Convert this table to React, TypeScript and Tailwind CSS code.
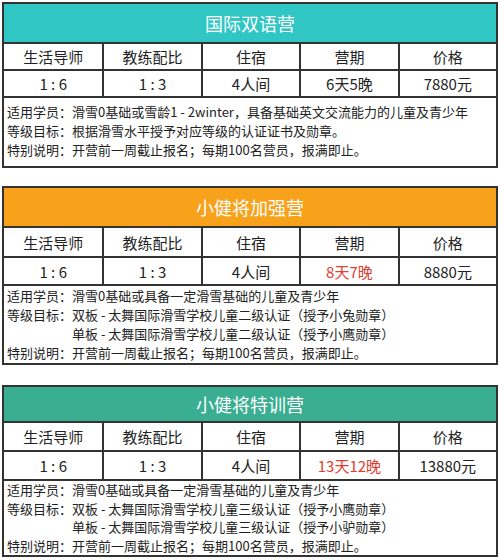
const font = { fontFamily: '"Noto Sans CJK SC", "Noto Sans", sans-serif' };

type Camp = {
  title: string;
  bar: string;
  period: string;
  periodRed: boolean;
  price: string;
  students: string;
  goals: string[];
  // per-table sizes, the three tables in the picture are not quite alike
  gap: string;
  titleH: string;
  headH: string;
  valH: string;
  textBox: string;
  line: string;
};

const camps: Camp[] = [
  {
    title: "国际双语营",
    bar: "bg-[#2fc6c4]",
    period: "6天5晚",
    periodRed: false,
    price: "7880元",
    students: "滑雪0基础或雪龄1 - 2winter，具备基础英文交流能力的儿童及青少年",
    goals: ["根据滑雪水平授予对应等级的认证证书及勋章。"],
    gap: "mt-0",
    titleH: "h-[38px]",
    headH: "h-[25px]",
    valH: "h-[25px]",
    textBox: "pt-[4px] pb-[7px]",
    line: "h-[19px] leading-[19px]",
  },
  {
    title: "小健将加强营",
    bar: "bg-[#f8a21c]",
    period: "8天7晚",
    periodRed: true,
    price: "8880元",
    students: "滑雪0基础或具备一定滑雪基础的儿童及青少年",
    goals: [
      "双板 - 太舞国际滑雪学校儿童二级认证（授予小兔勋章）",
      "单板 - 太舞国际滑雪学校儿童二级认证（授予小鹰勋章）",
    ],
    gap: "mt-[18px]",
    titleH: "h-[38px]",
    headH: "h-[28px]",
    valH: "h-[26px]",
    textBox: "pt-0 pb-[1px]",
    line: "h-[19px] leading-[19px]",
  },
  {
    title: "小健将特训营",
    bar: "bg-[#3aae90]",
    period: "13天12晚",
    periodRed: true,
    price: "13880元",
    students: "滑雪0基础或具备一定滑雪基础的儿童及青少年",
    goals: [
      "双板 - 太舞国际滑雪学校儿童三级认证（授予小鹰勋章）",
      "单板 - 太舞国际滑雪学校儿童三级认证（授予小驴勋章）",
    ],
    gap: "mt-[20px]",
    titleH: "h-[34px]",
    headH: "h-[27px]",
    valH: "h-[27px]",
    textBox: "pt-0 pb-0",
    line: "h-[18.5px] leading-[18.5px]",
  },
];

const heads = ["生活导师", "教练配比", "住宿", "营期", "价格"];

function CampTable({ camp }: { camp: Camp }) {
  const values = ["1 : 6", "1 : 3", "4人间", camp.period, camp.price];
  return (
    <section className={`${camp.gap} border-2 border-[#333] bg-white`}>
      <div className={`flex ${camp.titleH} items-center justify-center ${camp.bar} text-[18px] leading-none text-white`}>
        {camp.title}
      </div>
      <div className="grid grid-cols-5 border-t-2 border-[#333]">
        {heads.map((h, i) => (
          <div
            key={h}
            className={`flex ${camp.headH} items-center justify-center text-[15px] leading-none text-[#222] ${i > 0 ? "border-l-2 border-[#333]" : ""}`}
          >
            {h}
          </div>
        ))}
      </div>
      <div className="grid grid-cols-5 border-t-2 border-[#333]">
        {values.map((v, i) => (
          <div
            key={i}
            className={`flex ${camp.valH} items-center justify-center text-[15px] leading-none ${i === 3 && camp.periodRed ? "text-[#e0402f]" : "text-[#222]"} ${i > 0 ? "border-l-2 border-[#333]" : ""}`}
          >
            {v}
          </div>
        ))}
      </div>
      <div className={`flex flex-col border-t-2 border-[#333] px-[3px] ${camp.textBox} text-[13px] text-[#222]`}>
        <p className={`${camp.line} whitespace-nowrap`}>适用学员：{camp.students}</p>
        <div className="flex items-start">
          <span className={`${camp.line} shrink-0`}>等级目标：</span>
          <div className="flex flex-col">
            {camp.goals.map((g) => (
              <p key={g} className={`${camp.line} whitespace-nowrap`}>{g}</p>
            ))}
          </div>
        </div>
        <p className={`${camp.line} whitespace-nowrap`}>特别说明：开营前一周截止报名；每期100名营员，报满即止。</p>
      </div>
    </section>
  );
}

export default function App() {
  return (
    <main className="h-[560px] w-[500px] overflow-hidden bg-white px-[2px] pt-[2px]" style={font}>
      <div className="flex flex-col">
        {camps.map((c) => (
          <CampTable key={c.title} camp={c} />
        ))}
      </div>
    </main>
  );
}
